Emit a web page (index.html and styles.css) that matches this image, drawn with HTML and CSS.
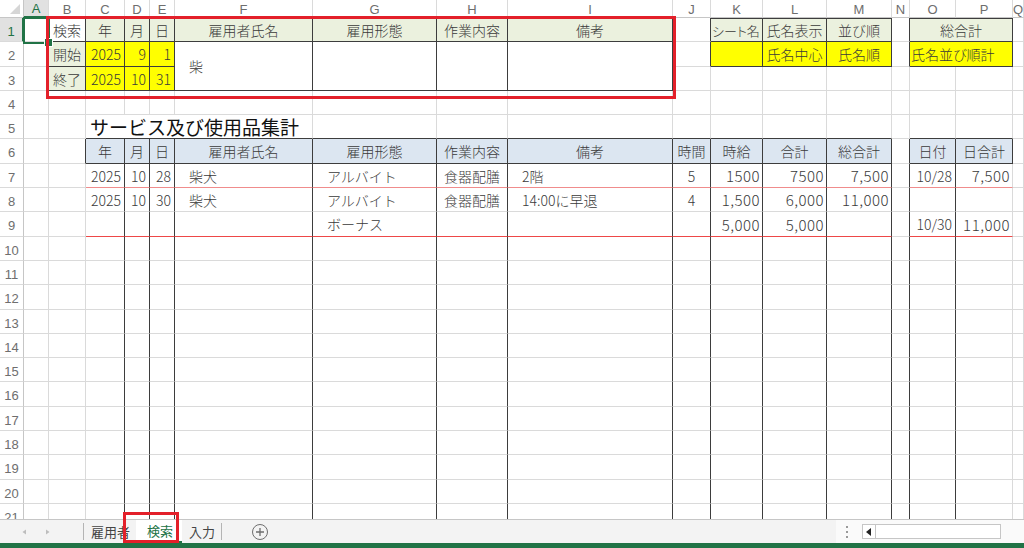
FILE: index.html
```html
<!DOCTYPE html>
<html lang="ja">
<head>
    <meta charset="UTF-8">
    <meta name="viewport" content="width=device-width, initial-scale=1.0">
    <title>検索 - サービス及び使用品集計</title>
    <link rel="stylesheet" href="styles.css">
</head>
<body>
    <div class="app">
        <div class="sheet">
            <div class="grid" id="grid"></div>
            <div class="selection"></div>
        </div>

        <div class="tabbar">
            <div class="tab-nav">
                <svg width="83" height="23" viewBox="0 0 83 23">
                    <polygon points="26,9.5 26,14.5 22.5,12" fill="#bdbdbd"/>
                    <polygon points="46,9.5 46,14.5 49.5,12" fill="#bdbdbd"/>
                </svg>
            </div>
            <span class="tab-sep"></span>
            <div class="tab first">雇用者</div>
            <div class="tab active">検索</div>
            <div class="tab">入力</div>
            <span class="tab-sep"></span>
            <div class="tab-add">
                <svg width="18" height="18" viewBox="0 0 18 18">
                    <circle cx="9" cy="9" r="7.5" fill="none" stroke="#6e6e6e" stroke-width="1"/>
                    <path d="M9 5v8M5 9h8" stroke="#6e6e6e" stroke-width="1.3"/>
                </svg>
            </div>
            <div class="hscroll">
                <svg class="grip" width="4" height="16" viewBox="0 0 4 16">
                    <rect x="1" y="2" width="2" height="2" fill="#9a9a9a"/>
                    <rect x="1" y="7" width="2" height="2" fill="#9a9a9a"/>
                    <rect x="1" y="12" width="2" height="2" fill="#9a9a9a"/>
                </svg>
                <div class="scrollbox">
                    <span class="scroll-btn">
                        <svg width="6" height="8" viewBox="0 0 6 8"><polygon points="5,0 5,8 0,4" fill="#222"/></svg>
                    </span>
                </div>
            </div>
        </div>
        <div class="statusbar"></div>

        <div class="mark mark-query"></div>
        <div class="mark mark-tab"></div>
    </div>

    <script>
        const COLS = 'ABCDEFGHIJKLMNOPQR';
        const LAST_ROW = 21;

        // [text, classes, colspan, rowspan]
        const cells = {
            B1: ['検索', 'ctr'],
            C1: ['年', 'ctr fill-green'], D1: ['月', 'ctr fill-green'], E1: ['日', 'ctr fill-green'],
            F1: ['雇用者氏名', 'ctr fill-green'], G1: ['雇用形態', 'ctr fill-green'],
            H1: ['作業内容', 'ctr fill-green'], I1: ['備考', 'ctr fill-green'],
            K1: ['シート名', 'ctr fill-green tight small'], L1: ['氏名表示', 'ctr fill-green'],
            M1: ['並び順', 'ctr fill-green'], O1: ['総合計', 'ctr fill-green', 2],

            B2: ['開始', 'ctr fill-green'], C2: ['2025', 'rt fill-yellow'],
            D2: ['9', 'rt fill-yellow'], E2: ['1', 'rt fill-yellow'],
            F2: ['柴', 'ind', 1, 2], G2: ['', '', 1, 2], H2: ['', '', 1, 2], I2: ['', '', 1, 2],
            K2: ['', 'fill-yellow'], L2: ['氏名中心', 'ctr fill-yellow'],
            M2: ['氏名順', 'ctr fill-yellow'], O2: ['氏名並び順計', 'fill-yellow tight', 2],

            B3: ['終了', 'ctr fill-green'], C3: ['2025', 'rt fill-yellow'],
            D3: ['10', 'rt fill-yellow'], E3: ['31', 'rt fill-yellow'],

            C5: ['サービス及び使用品集計', 'title', 4],

            C6: ['年', 'ctr fill-blue'], D6: ['月', 'ctr fill-blue'], E6: ['日', 'ctr fill-blue'],
            F6: ['雇用者氏名', 'ctr fill-blue'], G6: ['雇用形態', 'ctr fill-blue'],
            H6: ['作業内容', 'ctr fill-blue'], I6: ['備考', 'ctr fill-blue'],
            J6: ['時間', 'ctr fill-blue'], K6: ['時給', 'ctr fill-blue'], L6: ['合計', 'ctr fill-blue'],
            M6: ['総合計', 'ctr fill-blue'], O6: ['日付', 'ctr fill-blue'], P6: ['日合計', 'ctr fill-blue'],

            C7: ['2025', 'rt'], D7: ['10', 'rt'], E7: ['28', 'rt'], F7: ['柴犬', 'ind'],
            G7: ['アルバイト', 'ind'], H7: ['食器配膳', 'ctr'], I7: ['2階', 'ind'], J7: ['5', 'ctr'],
            K7: ['1500', 'rt num'], L7: ['7500', 'rt num'], M7: ['7,500', 'rt num'],
            O7: ['10/28', 'rt'], P7: ['7,500', 'rt num'],

            C8: ['2025', 'rt'], D8: ['10', 'rt'], E8: ['30', 'rt'], F8: ['柴犬', 'ind'],
            G8: ['アルバイト', 'ind'], H8: ['食器配膳', 'ctr'], I8: ['14:00に早退', 'ind'], J8: ['4', 'ctr'],
            K8: ['1,500', 'rt num'], L8: ['6,000', 'rt num'], M8: ['11,000', 'rt num'],

            G9: ['ボーナス', 'ind'], K9: ['5,000', 'rt num'], L9: ['5,000', 'rt num'],
            O9: ['10/30', 'rt'], P9: ['11,000', 'rt num']
        };

        function parse(ref) {
            return [COLS.indexOf(ref[0]), parseInt(ref.slice(1), 10)];
        }

        // which cell owns a merged area
        const owner = {};
        for (const [ref, v] of Object.entries(cells)) {
            const [c, r] = parse(ref);
            for (let i = 0; i < (v[2] || 1); i++) {
                for (let j = 0; j < (v[3] || 1); j++) {
                    owner[COLS[c + i] + (r + j)] = ref;
                }
            }
        }

        const extra = {};
        function add(c, r, ...names) {
            if (c < 0 || r < 1) return;
            const ref = COLS[c] + r;
            const key = owner[ref] || ref;
            (extra[key] = extra[key] || []).push(...names);
        }

        // dark grid around a block, drawn on right/bottom edges
        function frame(from, to) {
            const [c1, r1] = parse(from);
            const [c2, r2] = parse(to);
            for (let r = r1; r <= r2; r++) {
                for (let c = c1; c <= c2; c++) add(c, r, 'dr', 'db');
                add(c1 - 1, r, 'dr');
            }
            for (let c = c1; c <= c2; c++) {
                if (r1 > 1) add(c, r1 - 1, 'db');
                else add(c, r1, 'dt');
            }
        }

        frame('B1', 'I3');
        frame('K1', 'M2');
        frame('O1', 'P2');
        frame('C6', 'M6');
        frame('O6', 'P6');

        for (let r = 7; r <= LAST_ROW; r++) {
            for (const col of 'CDEFGHIJKLMNO') add(COLS.indexOf(col), r, 'dr');
        }
        for (const col of 'CDEFGHIJKLMOP') {
            add(COLS.indexOf(col), 7, 'line-pink');
            add(COLS.indexOf(col), 9, 'line-red');
        }

        const grid = document.getElementById('grid');

        function el(cls, text) {
            const d = document.createElement('div');
            d.className = cls;
            if (text) d.textContent = text;
            return d;
        }

        grid.appendChild(el('corner'));
        for (const col of COLS) {
            grid.appendChild(el('col-head' + (col === 'A' ? ' on' : ''), col));
        }

        for (let r = 1; r <= LAST_ROW; r++) {
            grid.appendChild(el('row-head' + (r === 1 ? ' on' : ''), String(r)));
            for (const col of COLS) {
                const ref = col + r;
                if (owner[ref] && owner[ref] !== ref) continue;
                const spec = cells[ref] || ['', ''];
                let cls = 'cell ' + spec[1];
                if (spec[2] > 1) cls += ' span-c' + spec[2];
                if (spec[3] > 1) cls += ' span-r' + spec[3];
                if (extra[ref]) cls += ' ' + extra[ref].join(' ');
                grid.appendChild(el(cls, spec[0]));
            }
        }
    </script>
</body>
</html>
```

FILE: styles.css
```css
:root {
    --grid-line: #dadada;
    --head-line: #c6c6c6;
    --dark-line: #3d3d3d;
    --excel-green: #217346;
    --mark-red: #e3202a;
}

* {
    margin: 0;
    padding: 0;
    box-sizing: border-box;
}

body {
    width: 1024px;
    height: 548px;
    overflow: hidden;
    background-color: #fff;
    color: #3a3a3a;
    font-family: "Noto Sans CJK JP", "Noto Sans", sans-serif;
}

.app {
    position: relative;
    width: 1024px;
    height: 548px;
    display: flex;
    flex-direction: column;
}

/* sheet */

.sheet {
    position: relative;
    height: 519px;
    overflow: hidden;
}

.grid {
    display: grid;
    grid-template-columns: 24px 25px 37px 39px 25px 25px 138px 124px 71px 165px 38px 52px 64px 65px 18px 46px 57px 11px 40px;
    grid-template-rows: 18px 24px 25px 24px 24px 24px 25px 24px 24px 25px 24px 24px 25px 24px 24px 24px 25px 24px 24px 25px 24px 24px;
    width: 1064px;
}

.corner {
    position: relative;
    border-right: 1px solid var(--head-line);
    border-bottom: 1px solid var(--head-line);
}

.corner::after {
    content: "";
    position: absolute;
    right: 3px;
    bottom: 3px;
    border-style: solid;
    border-width: 0 0 10px 10px;
    border-color: transparent transparent #d6d6d6 transparent;
}

.col-head,
.row-head {
    display: flex;
    align-items: center;
    justify-content: center;
    font-family: "Liberation Sans", Arial, sans-serif;
    font-size: 13px;
    color: #6e6e6e;
    background-color: #fff;
    white-space: nowrap;
}

.col-head {
    border-right: 1px solid var(--grid-line);
    border-bottom: 1px solid var(--head-line);
    padding-top: 1px;
}

.row-head {
    border-right: 1px solid var(--head-line);
    border-bottom: 1px solid var(--grid-line);
    padding-top: 3px;
}

.col-head.on {
    background-color: #e1e1e1;
    color: var(--excel-green);
    border-bottom: 2px solid var(--excel-green);
}

.row-head.on {
    background-color: #e1e1e1;
    color: var(--excel-green);
    border-right: 2px solid var(--excel-green);
}

.cell {
    display: flex;
    align-items: center;
    padding: 0 3px;
    font-size: 14px;
    font-weight: 300;
    line-height: 1;
    white-space: nowrap;
    border-right: 1px solid var(--grid-line);
    border-bottom: 1px solid var(--grid-line);
}

.span-c2 { grid-column: span 2; }
.span-c4 { grid-column: span 4; }
.span-r2 { grid-row: span 2; }

.ctr { justify-content: center; }
.rt { justify-content: flex-end; }
.ind { padding-left: 14px; }
.tight { padding: 0 1px; font-feature-settings: "palt"; }
.small { font-size: 13px; justify-content: flex-start; }
.num { font-size: 15px; letter-spacing: 0.5px; padding-right: 2px; }

.fill-green { background-color: #ebf1de; }
.fill-blue { background-color: #dce6f1; }
.fill-yellow { background-color: #ffff00; }

.title {
    align-items: flex-end;
    padding: 0 0 2px 4px;
    font-size: 19px;
    font-weight: 400;
    color: #111;
}

.dr { border-right-color: var(--dark-line); }
.db { border-bottom-color: var(--dark-line); }
.dt { border-top: 1px solid var(--dark-line); }
.line-pink { border-bottom-color: #f08c8c; }
.line-red { border-bottom-color: #ee4848; }

.selection {
    position: absolute;
    left: 23px;
    top: 17px;
    width: 27px;
    height: 27px;
    border: 2px solid var(--excel-green);
}

.selection::after {
    content: "";
    position: absolute;
    right: -5px;
    bottom: -5px;
    width: 7px;
    height: 7px;
    background-color: var(--excel-green);
    border: 1px solid #fff;
}

/* sheet tabs */

.tabbar {
    height: 24px;
    display: flex;
    align-items: stretch;
    background-color: #f3f3f3;
    border-top: 1px solid var(--head-line);
    font-size: 13px;
    color: #444;
}

.tab-nav {
    width: 83px;
}

.tab-sep {
    width: 1px;
    height: 17px;
    align-self: center;
    background-color: #b4b4b4;
}

.tab {
    display: flex;
    align-items: center;
    padding: 0 6px 0 7px;
}

.tab.active {
    padding: 0 9px 0 11px;
    background-color: #fff;
    color: var(--excel-green);
    border-bottom: 2px solid var(--excel-green);
}

.tab-add {
    display: flex;
    align-items: center;
    margin-left: 29px;
}

.hscroll {
    margin-left: auto;
    width: 188px;
    display: flex;
    align-items: center;
    background-color: #fafafa;
}

.grip {
    margin-left: 9px;
}

.scrollbox {
    margin-left: 13px;
    width: 139px;
    height: 15px;
    background-color: #fff;
    border: 1px solid #c6c6c6;
}

.scroll-btn {
    display: flex;
    align-items: center;
    justify-content: center;
    width: 13px;
    height: 100%;
    border-right: 1px solid #c6c6c6;
}

.statusbar {
    height: 5px;
    background-color: var(--excel-green);
}

/* red call-out boxes */

.mark {
    position: absolute;
    border: 3px solid var(--mark-red);
    pointer-events: none;
}

.mark-query {
    left: 46px;
    top: 16px;
    width: 630px;
    height: 83px;
}

.mark-tab {
    left: 123px;
    top: 512px;
    width: 56px;
    height: 31px;
}
```
